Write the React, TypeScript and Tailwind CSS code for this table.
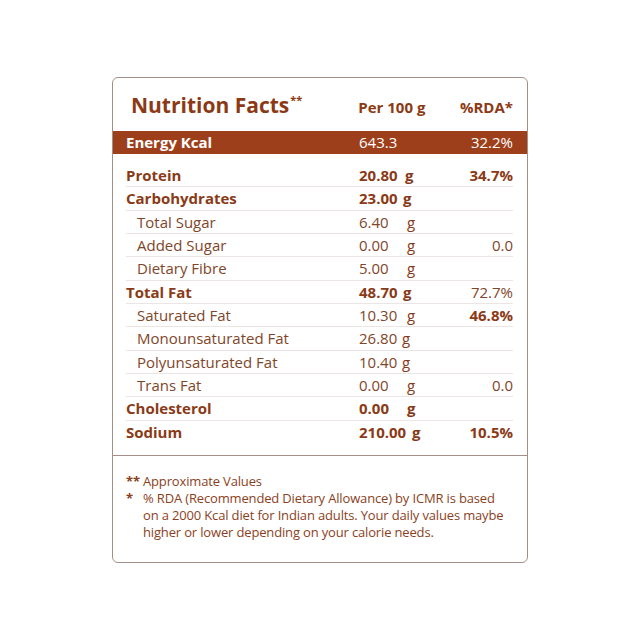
const rows = [
  { label: 'Protein', value: '20.80', valW: 'w-[46px]', rda: '34.7%', bold: true, rdaBold: true },
  { label: 'Carbohydrates', value: '23.00', valW: 'w-[44px]', rda: '', bold: true, rdaBold: false },
  { label: 'Total Sugar', value: '6.40', valW: 'w-[48px]', rda: '', bold: false, rdaBold: false },
  { label: 'Added Sugar', value: '0.00', valW: 'w-[48px]', rda: '0.0', bold: false, rdaBold: false },
  { label: 'Dietary Fibre', value: '5.00', valW: 'w-[48px]', rda: '', bold: false, rdaBold: false },
  { label: 'Total Fat', value: '48.70', valW: 'w-[44px]', rda: '72.7%', bold: true, rdaBold: false },
  { label: 'Saturated Fat', value: '10.30', valW: 'w-[48px]', rda: '46.8%', bold: false, rdaBold: true },
  { label: 'Monounsaturated Fat', value: '26.80', valW: 'w-[43px]', rda: '', bold: false, rdaBold: false },
  { label: 'Polyunsaturated Fat', value: '10.40', valW: 'w-[43px]', rda: '', bold: false, rdaBold: false },
  { label: 'Trans Fat', value: '0.00', valW: 'w-[48px]', rda: '0.0', bold: false, rdaBold: false },
  { label: 'Cholesterol', value: '0.00', valW: 'w-[48px]', rda: '', bold: true, rdaBold: false },
  { label: 'Sodium', value: '210.00', valW: 'w-[53px]', rda: '10.5%', bold: true, rdaBold: true },
]

const NutritionRow = ({ label, value, valW, rda, bold, rdaBold, last }: {
  label: string
  value: string
  valW: string
  rda: string
  bold: boolean
  rdaBold: boolean
  last: boolean
}) => (
  <div className={`flex items-center h-[23.33px] text-[15px] ${last ? '' : 'border-b border-[#ebe6e3]'}`}>
    <div className={`w-[233px] ${bold ? 'font-bold text-[#8a3a16]' : 'pl-[11px] text-[#80462a]'}`}>{label}</div>
    <div className={`w-[100px] flex whitespace-nowrap ${bold ? 'font-bold text-[#8a3a16]' : 'text-[#80462a]'}`}>
      <span className={valW}>{value}</span>
      <span className="text-[#863a18]">g</span>
    </div>
    <div className={`flex-1 text-right ${rdaBold ? 'font-bold text-[#8a3a16]' : 'text-[#80462a]'}`}>{rda}</div>
  </div>
)

export default function App() {
  return (
    <div
      className="w-[640px] h-[640px] bg-white pt-[77px] pl-[112px]"
      style={{ fontFamily: '"Open Sans", "Liberation Sans", sans-serif' }}
    >
      <div className="w-[416px] h-[486px] border border-[#a48f86] rounded-[6px] flex flex-col">
        {/* header */}
        <div className="h-[53px] flex items-center pl-[18px] pr-[14px] pt-[2px]">
          <div className="w-[228px] text-[21px] font-bold text-[#8c3a15] leading-none flex items-start">
            <span>Nutrition Facts</span>
            <span className="text-[11px] leading-none ml-[1px] -mt-[1px]">**</span>
          </div>
          <div className="w-[102px] text-[15px] font-bold text-[#8c3a15] pt-[4px]">Per 100 g</div>
          <div className="flex-1 text-right text-[15px] font-bold text-[#8c3a15] pt-[4px]">%RDA*</div>
        </div>

        {/* energy bar */}
        <div className="h-[23px] bg-[#9e3f1c] flex items-center pl-[13px] pr-[14px] text-white text-[15px]">
          <div className="w-[233px] font-bold">Energy Kcal</div>
          <div className="w-[100px]">643.3</div>
          <div className="flex-1 text-right">32.2%</div>
        </div>

        {/* nutrient rows */}
        <div className="pt-[10px] pl-[13px] pr-[14px] pb-[11px] border-b border-[#a48f86]">
          {rows.map((r, i) => (
            <NutritionRow key={r.label} {...r} last={i === rows.length - 1} />
          ))}
        </div>

        {/* footnotes */}
        <div className="pt-[17px] pl-[13px] text-[13px] tracking-[-0.012em] leading-[17px] text-[#8b3f1d]">
          <div className="flex">
            <span className="w-[17px] font-bold">**</span>
            <span>Approximate Values</span>
          </div>
          <div className="flex">
            <span className="w-[17px] font-bold shrink-0">*</span>
            <span className="w-[365px]">
              % RDA (Recommended Dietary Allowance) by ICMR is based on a 2000 Kcal diet for Indian adults. Your daily
              values maybe higher or lower depending on your calorie needs.
            </span>
          </div>
        </div>
      </div>
    </div>
  )
}
